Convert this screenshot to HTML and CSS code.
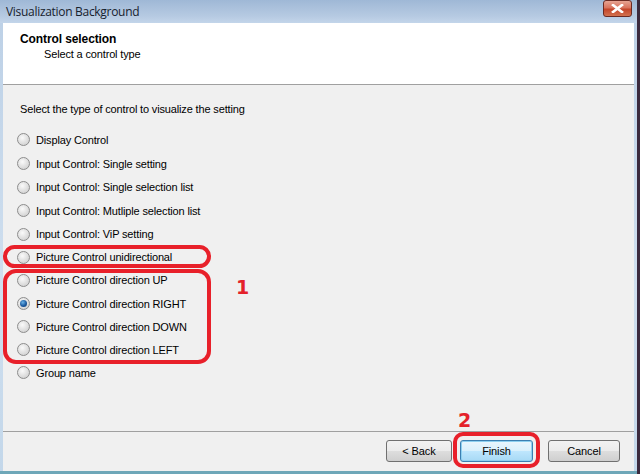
FILE: index.html
```html
<!DOCTYPE html>
<html>
<head>
<meta charset="utf-8">
<link rel="stylesheet" href="styles.css">
</head>
<body>
<div class="window">
  <div class="titlebar">
    <span class="title">Visualization Background</span>
    <span class="close"><svg width="13" height="9" viewBox="0 0 13 9"><path d="M2 1 L11 8 M11 1 L2 8" stroke="#fff" stroke-width="2.6" stroke-linecap="square"/></svg></span>
  </div>
  <div class="client">
    <div class="header">
      <div class="h-title">Control selection</div>
      <div class="h-sub">Select a control type</div>
    </div>
    <div class="content">
      <div class="intro">Select the type of control to visualize the setting</div>
      <div class="options">
        <label class="opt"><span class="radio"></span>Display Control</label>
        <label class="opt"><span class="radio"></span>Input Control: Single setting</label>
        <label class="opt"><span class="radio"></span>Input Control: Single selection list</label>
        <label class="opt"><span class="radio"></span>Input Control: Mutliple selection list</label>
        <label class="opt"><span class="radio"></span>Input Control: ViP setting</label>
        <label class="opt"><span class="radio"></span>Picture Control unidirectional</label>
        <label class="opt"><span class="radio"></span>Picture Control direction UP</label>
        <label class="opt"><span class="radio checked"></span>Picture Control direction RIGHT</label>
        <label class="opt"><span class="radio"></span>Picture Control direction DOWN</label>
        <label class="opt"><span class="radio"></span>Picture Control direction LEFT</label>
        <label class="opt"><span class="radio"></span>Group name</label>
      </div>
    </div>
    <div class="footer">
      <button class="btn back">&lt; Back</button>
      <button class="btn finish">Finish</button>
      <button class="btn cancel">Cancel</button>
    </div>
  </div>
  <div class="mark oval"></div>
  <div class="mark group"></div>
  <div class="mark finishbox"></div>
  <div class="num n1">1</div>
  <div class="num n2">2</div>
</div>
</body>
</html>
```
FILE: styles.css
```css
html, body {
  margin: 0;
  padding: 0;
}
body {
  width: 640px;
  height: 474px;
  overflow: hidden;
  background: #3b2a3e;
  font-family: "Liberation Sans", Arial, sans-serif;
  font-size: 11px;
  letter-spacing: -0.15px;
  color: #000;
}
.window {
  position: relative;
  width: 637px;
  height: 474px;
  display: flex;
  flex-direction: column;
  background: linear-gradient(#bcd0e6, #cfdfef 60%, #c3d7ea);
  box-sizing: border-box;
  padding: 0 3px 3px 3px;
}
.window::after {
  content: "";
  position: absolute;
  left: 0; right: 0; bottom: 0;
  height: 3px;
  background: #6ea7b8;
}
.titlebar {
  height: 23px;
  margin: 0 -3px;
  padding: 0 5px 0 6px;
  display: flex;
  align-items: center;
  justify-content: space-between;
  background: linear-gradient(#9fb8d6, #b6cae2 70%, #c3d5ea);
}
.title {
  font-family: "Open Sans", "Liberation Sans", sans-serif;
  font-size: 12px;
  color: #17212e;
  letter-spacing: -0.3px;
}
.close {
  width: 29px;
  height: 17px;
  margin-top: -6px;
  box-sizing: border-box;
  border: 1px solid #6b2a22;
  border-radius: 3px;
  background: linear-gradient(#e7a493, #d8735d 45%, #c4452a 55%, #d2714f);
  display: flex;
  align-items: center;
  justify-content: center;
}
.client {
  flex: 1;
  display: flex;
  flex-direction: column;
  background: #f0f0f0;
}
.header {
  height: 62px;
  background: #fff;
  border-bottom: 1px solid #a0a0a0;
  padding: 9px 0 0 17px;
  box-sizing: border-box;
}
.h-title {
  font-weight: bold;
  font-size: 12px;
  line-height: 15px;
  letter-spacing: -0.1px;
}
.h-sub {
  margin-left: 24px;
  line-height: 14px;
}
.content {
  flex: 1;
  padding: 17px 0 0 17px;
}
.intro {
  line-height: 14px;
  margin-bottom: 12px;
}
.options {
  display: flex;
  flex-direction: column;
}
.opt {
  display: flex;
  align-items: center;
  height: 23.3px;
  margin-left: -3px;
}
.opt:nth-child(-n+4) {
  height: 23.7px;
}
.opt:nth-child(n+5) {
  height: 23.1px;
}
.radio {
  width: 13px;
  height: 13px;
  box-sizing: border-box;
  border-radius: 50%;
  border: 1px solid #8d8d8d;
  background: radial-gradient(circle at 40% 35%, #fafafa, #dcdcdc 60%, #c9c9c9);
  margin-right: 6px;
  position: relative;
}
.radio.checked::after {
  content: "";
  position: absolute;
  left: 2px; top: 2px;
  width: 7px; height: 7px;
  border-radius: 50%;
  background: radial-gradient(circle at 40% 35%, #6ab2e6, #1b5aa0 55%, #0d3a70);
}
.footer {
  height: 40px;
  border-top: 1px solid #a0a0a0;
  display: flex;
  align-items: flex-start;
  padding: 8px 0 0 383px;
  box-sizing: border-box;
}
.btn {
  font-family: "Liberation Sans", Arial, sans-serif;
  font-size: 11px;
  letter-spacing: -0.1px;
  height: 22px;
  border: 1px solid #707070;
  border-radius: 3px;
  background: linear-gradient(#f2f2f2, #ebebeb 50%, #dddddd 51%, #cfcfcf);
  color: #000;
  padding: 0;
}
.back { width: 66px; }
.finish {
  width: 73px;
  margin-left: 8px;
  border-color: #3c7fb1;
  box-shadow: inset 0 0 0 1px #8ed0f0;
  background: linear-gradient(#eaf6fd, #d9f0fc 50%, #bee6fd 51%, #a7d9f5);
}
.cancel { width: 72px; margin-left: 15px; }

.mark {
  position: absolute;
  border: 4px solid #e8202a;
  box-sizing: border-box;
}
.oval {
  left: 3px; top: 245px;
  width: 208px; height: 23px;
  border-radius: 12px;
}
.group {
  left: 3px; top: 269px;
  width: 208px; height: 95px;
  border-radius: 13px;
}
.finishbox {
  left: 453px; top: 432px;
  width: 87px; height: 36px;
  border-radius: 10px;
}
.num {
  position: absolute;
  color: #e4212a;
  font-family: "DejaVu Sans", Verdana, sans-serif;
  font-weight: bold;
  font-size: 19px;
  line-height: 20px;
  letter-spacing: 0;
}
.n1 { left: 236px; top: 277px; }
.n2 { left: 458px; top: 410px; }
```
